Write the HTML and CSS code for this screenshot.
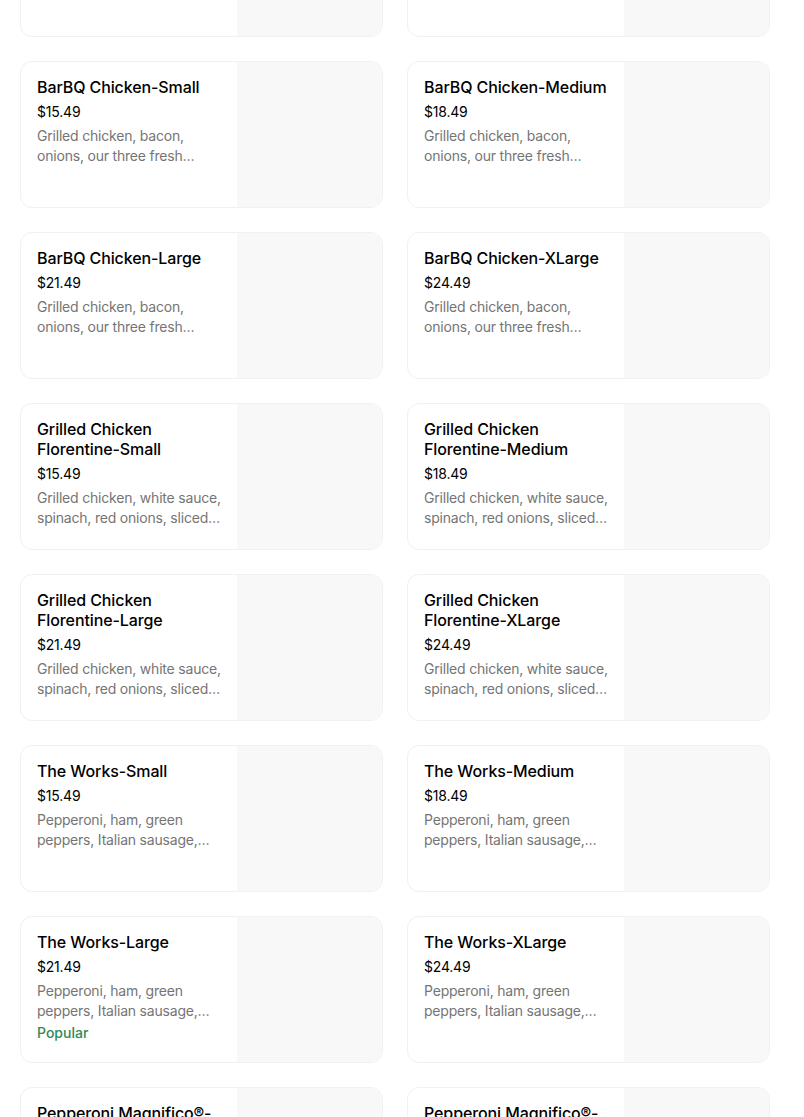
FILE: index.html
```html
<!DOCTYPE html>
<html lang="en">
<head>
<meta charset="utf-8">
<title>Menu</title>
<link rel="stylesheet" href="styles.css">
</head>
<body>
<div class="grid">
  <div class="card"><div class="info"></div><div class="img"></div></div>
  <div class="card"><div class="info"></div><div class="img"></div></div>

  <div class="card"><div class="info"><div class="title">BarBQ Chicken-Small</div><div class="price">$15.49</div><div class="desc">Grilled chicken, bacon, onions, our three fresh cheeses and BBQ sauce</div></div><div class="img"></div></div>
  <div class="card"><div class="info"><div class="title">BarBQ Chicken-Medium</div><div class="price">$18.49</div><div class="desc">Grilled chicken, bacon, onions, our three fresh cheeses and BBQ sauce</div></div><div class="img"></div></div>

  <div class="card"><div class="info"><div class="title">BarBQ Chicken-Large</div><div class="price">$21.49</div><div class="desc">Grilled chicken, bacon, onions, our three fresh cheeses and BBQ sauce</div></div><div class="img"></div></div>
  <div class="card"><div class="info"><div class="title">BarBQ Chicken-XLarge</div><div class="price">$24.49</div><div class="desc">Grilled chicken, bacon, onions, our three fresh cheeses and BBQ sauce</div></div><div class="img"></div></div>

  <div class="card"><div class="info"><div class="title">Grilled Chicken Florentine-Small</div><div class="price">$15.49</div><div class="desc">Grilled chicken, white sauce, spinach, red onions, sliced tomatoes and cheese</div></div><div class="img"></div></div>
  <div class="card"><div class="info"><div class="title">Grilled Chicken Florentine-Medium</div><div class="price">$18.49</div><div class="desc">Grilled chicken, white sauce, spinach, red onions, sliced tomatoes and cheese</div></div><div class="img"></div></div>

  <div class="card"><div class="info"><div class="title">Grilled Chicken Florentine-Large</div><div class="price">$21.49</div><div class="desc">Grilled chicken, white sauce, spinach, red onions, sliced tomatoes and cheese</div></div><div class="img"></div></div>
  <div class="card"><div class="info"><div class="title">Grilled Chicken Florentine-XLarge</div><div class="price">$24.49</div><div class="desc">Grilled chicken, white sauce, spinach, red onions, sliced tomatoes and cheese</div></div><div class="img"></div></div>

  <div class="card"><div class="info"><div class="title">The Works-Small</div><div class="price">$15.49</div><div class="desc">Pepperoni, ham, green peppers, Italian sausage, mushrooms, onions and olives</div></div><div class="img"></div></div>
  <div class="card"><div class="info"><div class="title">The Works-Medium</div><div class="price">$18.49</div><div class="desc">Pepperoni, ham, green peppers, Italian sausage, mushrooms, onions and olives</div></div><div class="img"></div></div>

  <div class="card"><div class="info"><div class="title">The Works-Large</div><div class="price">$21.49</div><div class="desc">Pepperoni, ham, green peppers, Italian sausage, mushrooms, onions and olives</div><div class="tag">Popular</div></div><div class="img"></div></div>
  <div class="card"><div class="info"><div class="title">The Works-XLarge</div><div class="price">$24.49</div><div class="desc">Pepperoni, ham, green peppers, Italian sausage, mushrooms, onions and olives</div></div><div class="img"></div></div>

  <div class="card"><div class="info"><div class="title">Pepperoni Magnifico®-Small</div><div class="price">$15.49</div><div class="desc">Double pepperoni and extra cheese</div></div><div class="img"></div></div>
  <div class="card"><div class="info"><div class="title">Pepperoni Magnifico®-Medium</div><div class="price">$18.49</div><div class="desc">Double pepperoni and extra cheese</div></div><div class="img"></div></div>
</div>
</body>
</html>
```
FILE: styles.css
```css
html, body {
  margin: 0;
  padding: 0;
  background: #ffffff;
}
body {
  font-family: Inter, "Liberation Sans", sans-serif;
  color: #000000;
  overflow: hidden;
}
.grid {
  display: grid;
  grid-template-columns: 363px 363px;
  column-gap: 24px;
  row-gap: 24px;
  width: 750px;
  margin: -110px 0 0 20px;
}
.card {
  box-sizing: border-box;
  height: 147px;
  display: flex;
  border: 1px solid #f1f1f1;
  border-radius: 12px;
  overflow: hidden;
  background: #ffffff;
}
.info {
  flex: 1;
  min-width: 0;
  padding: 15px 16px 16px 16px;
  display: flex;
  flex-direction: column;
}
.img {
  width: 145px;
  flex: none;
  background: #f8f8f8;
}
.title {
  font-size: 16px;
  line-height: 20px;
  font-weight: 500;
  color: #000000;
  letter-spacing: -0.1px;
}
.price {
  margin-top: 5px;
  font-size: 14px;
  line-height: 20px;
  color: #000000;
  letter-spacing: -0.2px;
}
.desc {
  margin-top: 4px;
  font-size: 14px;
  line-height: 20px;
  max-height: 40px;
  color: #757575;
  letter-spacing: -0.2px;
  display: -webkit-box;
  -webkit-line-clamp: 2;
  -webkit-box-orient: vertical;
  overflow: hidden;
}
.tag {
  margin-top: 2px;
  font-size: 14px;
  line-height: 20px;
  font-weight: 500;
  color: #2f8a56;
}
```
